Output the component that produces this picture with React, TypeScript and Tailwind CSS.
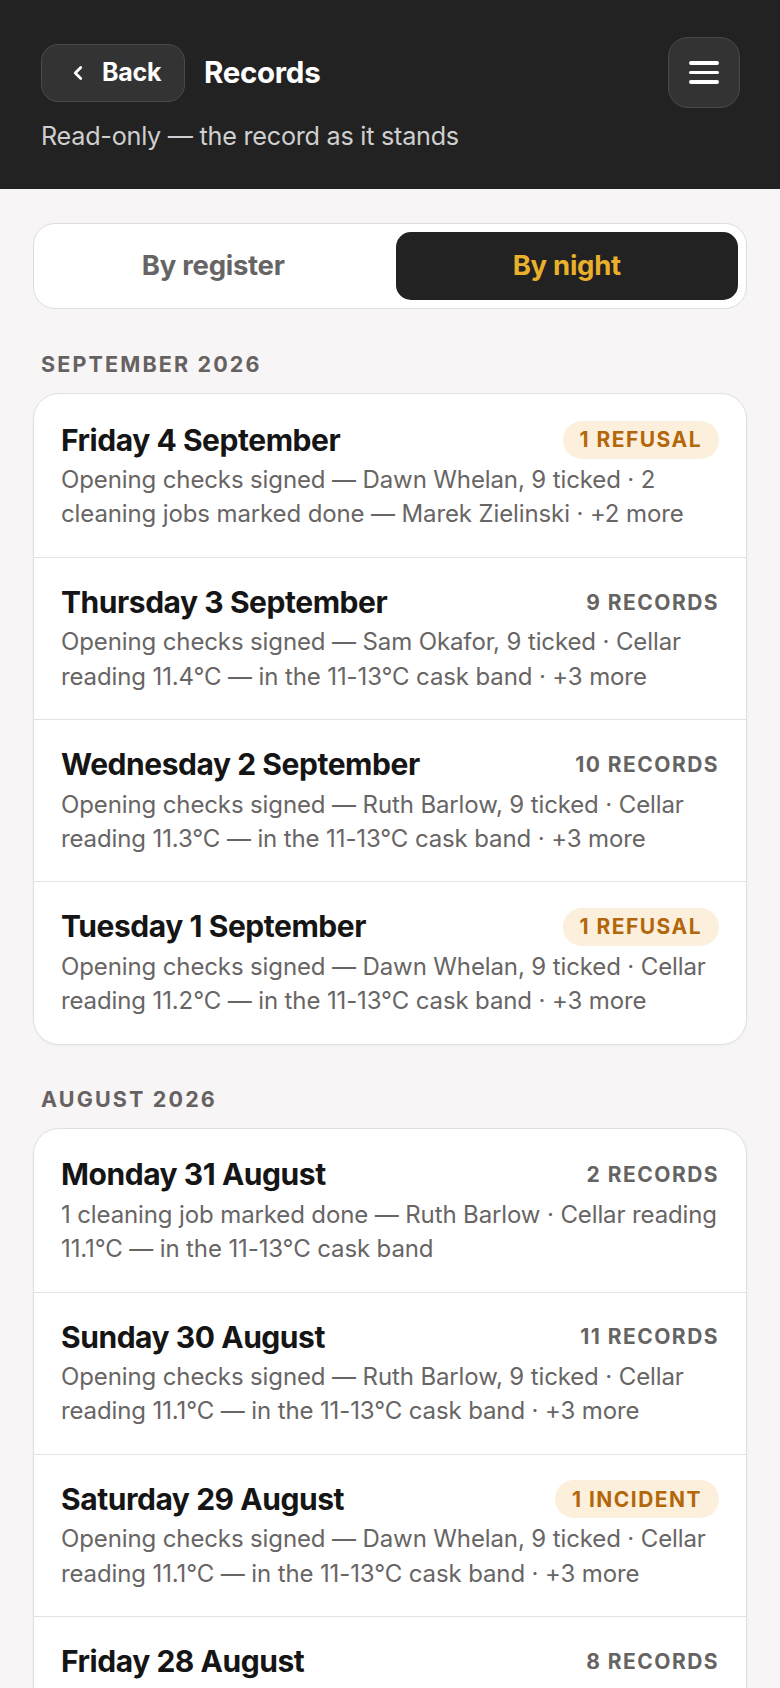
import { ChevronLeft } from "lucide-react";

type Night = {
  day: string;
  tag: string;
  flag?: boolean;
  text: string;
};

const MONTHS: { label: string; nights: Night[] }[] = [
  {
    label: "September 2026",
    nights: [
      {
        day: "Friday 4 September",
        tag: "1 refusal",
        flag: true,
        text: "Opening checks signed — Dawn Whelan, 9 ticked · 2 cleaning jobs marked done — Marek Zielinski · +2 more",
      },
      {
        day: "Thursday 3 September",
        tag: "9 records",
        text: "Opening checks signed — Sam Okafor, 9 ticked · Cellar reading 11.4°C — in the 11-13°C cask band · +3 more",
      },
      {
        day: "Wednesday 2 September",
        tag: "10 records",
        text: "Opening checks signed — Ruth Barlow, 9 ticked · Cellar reading 11.3°C — in the 11-13°C cask band · +3 more",
      },
      {
        day: "Tuesday 1 September",
        tag: "1 refusal",
        flag: true,
        text: "Opening checks signed — Dawn Whelan, 9 ticked · Cellar reading 11.2°C — in the 11-13°C cask band · +3 more",
      },
    ],
  },
  {
    label: "August 2026",
    nights: [
      {
        day: "Monday 31 August",
        tag: "2 records",
        text: "1 cleaning job marked done — Ruth Barlow · Cellar reading 11.1°C — in the 11-13°C cask band",
      },
      {
        day: "Sunday 30 August",
        tag: "11 records",
        text: "Opening checks signed — Ruth Barlow, 9 ticked · Cellar reading 11.1°C — in the 11-13°C cask band · +3 more",
      },
      {
        day: "Saturday 29 August",
        tag: "1 incident",
        flag: true,
        text: "Opening checks signed — Dawn Whelan, 9 ticked · Cellar reading 11.1°C — in the 11-13°C cask band · +3 more",
      },
      {
        day: "Friday 28 August",
        tag: "8 records",
        text: "Opening checks signed — Sam Okafor, 9 ticked · Cellar reading 11.2°C — in the 11-13°C cask band · +3 more",
      },
    ],
  },
];

export default function App() {
  return (
    <div className="min-h-screen bg-[#f7f5f5] font-['Inter','Noto_Sans',sans-serif] antialiased">
      <header className="bg-[#222222] pl-[41px] pr-[40px] pt-[37px] pb-[38px]">
        <div className="flex items-center">
          <button className="flex h-[58px] w-[144px] items-center rounded-[17px] border-[1.5px] border-[#4a4a4a] bg-[#333333] pl-[25px] text-white">
            <ChevronLeft className="h-[22px] w-[22px]" strokeWidth={3} />
            <span className="ml-[13px] text-[25px] font-bold tracking-[-0.01em]">Back</span>
          </button>
          <h1 className="ml-[19px] text-[29.5px] font-bold tracking-[-0.01em] text-white">Records</h1>
          <button className="ml-auto flex h-[71px] w-[72px] flex-col items-center justify-center gap-[6px] rounded-[20px] border-[1.5px] border-[#4a4a4a] bg-[#333333]">
            <span className="h-[3.5px] w-[30px] rounded-full bg-white" />
            <span className="h-[3.5px] w-[30px] rounded-full bg-white" />
            <span className="h-[3.5px] w-[30px] rounded-full bg-white" />
          </button>
        </div>
        <p className="mt-[13px] text-[25.2px] leading-[30px] tracking-[-0.01em] text-[#cfcfcf]">
          Read-only — the record as it stands
        </p>
      </header>

      <div className="mx-[33px] mt-[34px] flex h-[86px] gap-[11px] rounded-[22px] border-[1.5px] border-[#dedcdc] bg-white p-[8px]">
        <button className="flex-1 text-[27.5px] font-bold tracking-[-0.01em] text-[#666464]">By register</button>
        <button className="flex-1 rounded-[15px] bg-[#222222] text-[27.5px] font-bold tracking-[-0.01em] text-[#e9b02c]">
          By night
        </button>
      </div>

      <div className="pb-10">
        {MONTHS.map((m) => (
          <section key={m.label} className="mt-[42px] first:mt-[43px]">
            <h2 className="px-[41px] text-[21.5px] font-bold uppercase leading-[24px] tracking-[0.1em] text-[#666262]">
              {m.label}
            </h2>
            <div className="mx-[33px] mt-[17px] overflow-hidden rounded-[26px] border-[1.5px] border-[#e2dfdf] bg-white shadow-[0_1px_3px_rgba(0,0,0,0.04)]">
              {m.nights.map((n, i) => (
                <div
                  key={n.day}
                  className={`px-[27px] pb-[25px] ${i > 0 ? "border-t-[1.5px] border-[#e4e2e2] pt-[25.5px]" : "pt-[27px]"}`}
                >
                  <div className="flex h-[38px] items-center justify-between">
                    <span className="text-[30px] font-bold tracking-[-0.015em] text-[#151515]">{n.day}</span>
                    {n.flag ? (
                      <span className="flex h-[38px] items-center rounded-full bg-[#fcefdc] px-[17px] text-[21px] font-bold uppercase tracking-[0.07em] text-[#b3670b]">
                        {n.tag}
                      </span>
                    ) : (
                      <span className="text-[21px] font-bold uppercase tracking-[0.07em] text-[#666363]">
                        {n.tag}
                      </span>
                    )}
                  </div>
                  <p className="-mr-[8px] mt-[4px] text-[24px] leading-[34.4px] tracking-[-0.005em] text-[#686565]">
                    {n.text}
                  </p>
                </div>
              ))}
            </div>
          </section>
        ))}
      </div>
    </div>
  );
}
